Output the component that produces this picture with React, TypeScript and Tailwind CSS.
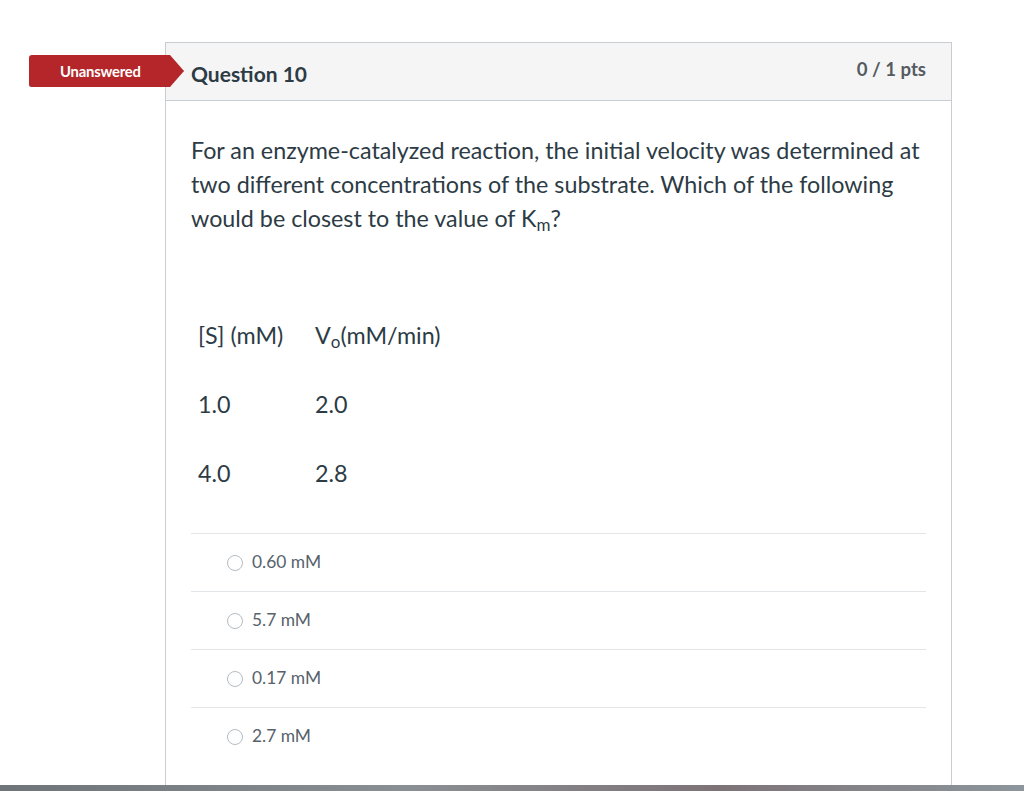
const answers = ['0.60 mM', '5.7 mM', '0.17 mM', '2.7 mM'];

const rows = [
    ['1.0', '2.0'],
    ['4.0', '2.8'],
];

export default function App() {
    return (
        <div className="flex h-[791px] w-[1024px] flex-col overflow-hidden bg-white font-['Lato','Liberation_Sans',sans-serif] text-[#2d3b45]">
            <div className="flex-1 pt-[42px] pl-[165px]">
                <div className="relative h-full w-[787px] border-x border-t border-[#c7cdd1]">
                    <div className="absolute top-[12px] left-[-137px] flex h-[32px] w-[155px] items-center rounded-l-[3px] bg-[#b4262a] pl-[31px] text-[14.8px] font-bold tracking-[-0.2px] text-white shadow-[0_1px_1px_rgba(0,0,0,0.25)] [clip-path:polygon(0_0,141px_0,155px_50%,141px_100%,0_100%)]">
                        Unanswered
                    </div>

                    <div className="flex h-[58px] items-start justify-between border-b border-[#c7cdd1] bg-[#f5f5f5] pr-[25px] pl-[25px]">
                        <h2 className="pt-[18px] text-[21px] leading-[26px] font-bold">Question 10</h2>
                        <span className="pt-[14px] text-[18.6px] leading-[24px] font-bold text-[#555b60]">0 / 1 pts</span>
                    </div>

                    <div className="px-[25px] pt-[32px]">
                        <p className="text-[23.3px] leading-[34px]">
                            For an enzyme-catalyzed reaction, the initial velocity was determined at two different
                            concentrations of the substrate. Which of the following would be closest to the value of K
                            <sub className="text-[17px]">m</sub>?
                        </p>

                        <table className="mt-[83px] ml-[7px] text-[23.3px] leading-[34px]">
                            <tbody>
                                <tr>
                                    <td className="w-[117px] pb-[35px]">[S] (mM)</td>
                                    <td className="pb-[35px]">
                                        V<sub className="text-[17px]">o</sub>(mM/min)
                                    </td>
                                </tr>
                                {rows.map(([s, v]) => (
                                    <tr key={s}>
                                        <td className="pb-[35px]">{s}</td>
                                        <td className="pb-[35px]">{v}</td>
                                    </tr>
                                ))}
                            </tbody>
                        </table>

                        <div className="mt-[8px]">
                            {answers.map((a) => (
                                <div key={a} className="flex h-[58px] items-center border-t border-[#e3e6e8] pl-[36px] text-[17.4px] text-[#57626c]">
                                    <span className="mr-[9px] inline-block h-[16px] w-[16px] rounded-full border border-[#b5bcc2] bg-white" />
                                    {a}
                                </div>
                            ))}
                        </div>
                    </div>
                </div>
            </div>
            <div className="h-[6px] bg-[linear-gradient(90deg,#6f7478,#8a8f93_40%,#7d7377_70%,#8c969c)]" />
        </div>
    );
}
